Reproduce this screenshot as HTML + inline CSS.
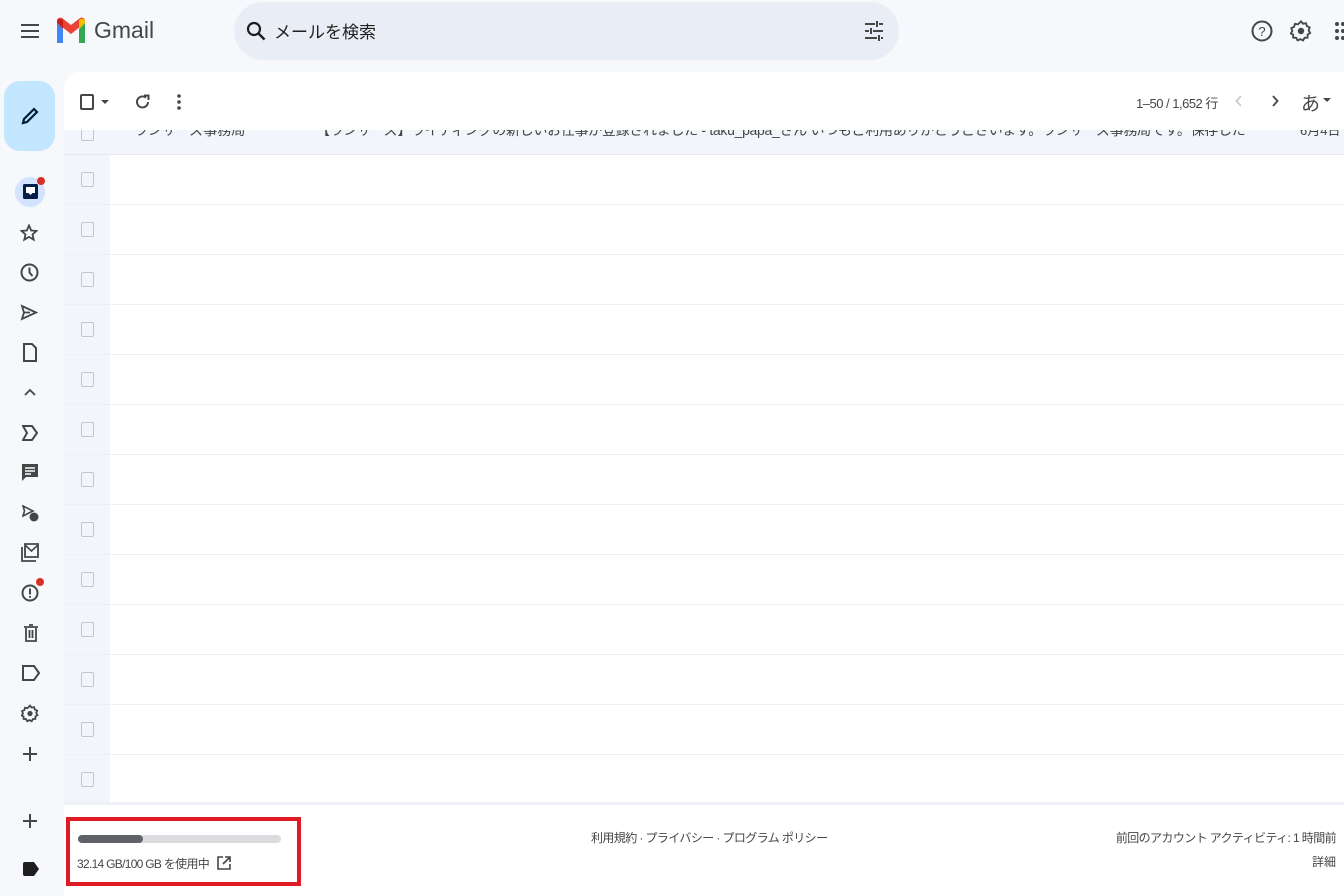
<!DOCTYPE html>
<html><head><meta charset="utf-8"><style>
*{margin:0;padding:0;box-sizing:border-box}
body{width:1344px;height:896px;overflow:hidden;background:#f6f8fc;font-family:"Liberation Sans","Noto Sans CJK JP",sans-serif;color:#444746;position:relative}
.abs{position:absolute}
svg{display:block}
.main{position:absolute;left:64px;top:72px;width:1290px;height:824px;background:#fff;border-top-left-radius:16px;overflow:hidden}
.row{position:absolute;left:0;width:1290px;height:50px;border-bottom:1px solid #eceff3}
.gcol{position:absolute;left:0;width:46px;height:100%;background:#f2f6fc}
.cb{position:absolute;left:17px;width:13px;height:15px;border:1.5px solid #c4c7c5;border-radius:2px}
.side{position:absolute;left:20px}
</style></head><body>
<!-- header -->
<div class="abs" style="left:21px;top:24px">
<svg width="18" height="14"><path d="M0 1h18M0 7h18M0 13h18" stroke="#444746" stroke-width="2"/></svg></div>
<div class="abs" style="left:56px;top:17px">
<svg width="30" height="28" viewBox="0 0 30 28"><path d="M1 6v20h6V12z" fill="#4285f4"/><path d="M23 12v14h6V6z" fill="#34a853"/><path d="M1 6l14 11 14-11v-2c0-3-3-4-5-3L15 8 6 1C4 0 1 1 1 4z" fill="#ea4335"/><path d="M23 3v9l6-6V4c0-2-3-3-6-1z" fill="#fbbc04"/><path d="M1 4v2l6 6V3C5 1 1 2 1 4z" fill="#c5221f"/></svg></div>
<div class="abs" style="left:94px;top:17px;font-size:23px;color:#444746">Gmail</div>
<div class="abs" style="left:234px;top:2px;width:665px;height:58px;background:#e9eef6;border-radius:29px"></div>
<div class="abs" style="left:246px;top:21px"><svg width="20" height="20"><circle cx="8" cy="8" r="6" fill="none" stroke="#1f1f1f" stroke-width="2.2"/><path d="M12.5 12.5l6 6" stroke="#1f1f1f" stroke-width="2.5"/></svg></div>
<div class="abs" style="left:274px;top:18px;font-size:17px;color:#1f1f1f">メールを検索</div>
<div class="abs" style="left:864px;top:21px"><svg width="20" height="20"><path d="M1 3h10M15 3h4M1 10h4M9 10h10M1 17h12M17 17h2M13 0v6M7 7v6M15 14v6" stroke="#444746" stroke-width="2"/></svg></div>
<div class="abs" style="left:1251px;top:20px"><svg width="22" height="22"><circle cx="11" cy="11" r="9.5" fill="none" stroke="#444746" stroke-width="2"/><text x="11" y="16" font-size="13" text-anchor="middle" fill="#444746" font-family="Liberation Sans">?</text></svg></div>
<div class="abs" style="left:1290px;top:19px"><svg width="22" height="24" viewBox="0 0 24 24"><path d="M12 1.5l2.2 2.6 3.3-.6.9 3.2 3.1 1.4-1.2 3.1 1.7 2.9-2.8 1.8v3.3l-3.3.2-1.6 2.9-3-1.4-3 1.4-1.6-2.9-3.3-.2v-3.3L.9 14.8l1.7-2.9-1.2-3.1 3.1-1.4.9-3.2 3.3.6z" fill="none" stroke="#444746" stroke-width="2"/><circle cx="12" cy="12" r="3.5" fill="#444746"/></svg></div>
<div class="abs" style="left:1335px;top:22px"><svg width="9" height="18"><g fill="#444746"><circle cx="2" cy="2" r="2"/><circle cx="8" cy="2" r="2"/><circle cx="2" cy="9" r="2"/><circle cx="8" cy="9" r="2"/><circle cx="2" cy="16" r="2"/><circle cx="8" cy="16" r="2"/></g></svg></div>

<!-- compose -->
<div class="abs" style="left:4px;top:81px;width:51px;height:70px;background:#c2e7ff;border-radius:16px"></div>
<div class="abs" style="left:20px;top:106px"><svg width="20" height="20"><path d="M3 17l1-4L14 3l3 3L7 16z" fill="none" stroke="#001d35" stroke-width="2.2"/></svg></div>

<!-- sidebar icons -->
<div class="abs" style="left:15px;top:177px;width:30px;height:30px;border-radius:15px;background:#d3e3fd"></div>
<div class="abs" style="left:23px;top:184px"><svg width="16" height="16"><rect x="0" y="0" width="15" height="15" rx="1.5" fill="#041e49"/><path d="M3 3h9v6H9.5l-2 2-2-2H3z" fill="#fff"/></svg></div>
<div class="abs" style="left:37px;top:177px;width:8px;height:8px;border-radius:4px;background:#d93025"></div>
<div class="side" style="top:224px"><svg width="18" height="18"><path d="M9 1.5l2.2 5 5.3.4-4 3.5 1.2 5.3L9 12.9l-4.7 2.8 1.2-5.3-4-3.5 5.3-.4z" fill="none" stroke="#444746" stroke-width="1.8"/></svg></div>
<div class="side" style="top:263px"><svg width="19" height="19"><circle cx="9.5" cy="9.5" r="8" fill="none" stroke="#444746" stroke-width="2"/><path d="M9.5 4.5v5l3 3.5" fill="none" stroke="#444746" stroke-width="2"/></svg></div>
<div class="side" style="top:304px"><svg width="18" height="17"><path d="M2 2l14 6.5L2 15l2-6.5z M4 8.5h6" fill="none" stroke="#444746" stroke-width="1.8"/></svg></div>
<div class="side" style="top:343px;left:23px"><svg width="14" height="19"><path d="M1 1h8l4 4v13H1z" fill="none" stroke="#444746" stroke-width="2"/></svg></div>
<div class="side" style="top:388px;left:24px"><svg width="12" height="8"><path d="M1 7l5-5 5 5" fill="none" stroke="#444746" stroke-width="1.8"/></svg></div>
<div class="side" style="top:425px;left:22px"><svg width="16" height="16"><path d="M1 1h9l5 7-5 7H1l4-7z" fill="none" stroke="#444746" stroke-width="2"/></svg></div>
<div class="side" style="top:463px;left:21px"><svg width="18" height="20"><path d="M1 1h16v13H5l-4 4z" fill="#444746"/><path d="M4 5h10M4 8h10M4 11h6" stroke="#fff" stroke-width="1.5"/></svg></div>
<div class="side" style="top:505px;left:22px"><svg width="18" height="18"><path d="M1 1l10 5L1 11l1.5-5z" fill="none" stroke="#444746" stroke-width="1.6"/><circle cx="12" cy="12" r="4.5" fill="#444746"/></svg></div>
<div class="side" style="top:543px;left:21px"><svg width="18" height="19"><path d="M4 1h13v13H4z M1 4v14h14" fill="none" stroke="#444746" stroke-width="1.8"/><path d="M4 2l6.5 6L17 2" fill="none" stroke="#444746" stroke-width="1.6"/></svg></div>
<div class="side" style="top:584px;left:21px"><svg width="18" height="18"><circle cx="9" cy="9" r="7.5" fill="none" stroke="#444746" stroke-width="2"/><path d="M9 4.5v6M9 12v1.8" stroke="#444746" stroke-width="2"/></svg></div>
<div class="abs" style="left:36px;top:578px;width:8px;height:8px;border-radius:4px;background:#d93025"></div>
<div class="side" style="top:624px;left:24px"><svg width="14" height="18"><path d="M0 3h14M5 1h4M2 4v13h10V4M5.5 6v8M8.5 6v8" fill="none" stroke="#444746" stroke-width="1.8"/></svg></div>
<div class="side" style="top:665px;left:22px"><svg width="18" height="16"><path d="M1 1h11l5 7-5 7H1z" fill="none" stroke="#444746" stroke-width="2"/></svg></div>
<div class="side" style="top:704px;left:21px"><svg width="18" height="19" viewBox="0 0 24 24"><path d="M12 1.5l2.2 2.6 3.3-.6.9 3.2 3.1 1.4-1.2 3.1 1.7 2.9-2.8 1.8v3.3l-3.3.2-1.6 2.9-3-1.4-3 1.4-1.6-2.9-3.3-.2v-3.3L.9 14.8l1.7-2.9-1.2-3.1 3.1-1.4.9-3.2 3.3.6z" fill="none" stroke="#444746" stroke-width="2.4"/><circle cx="12" cy="12" r="3.5" fill="#444746"/></svg></div>
<div class="side" style="top:746px;left:22px"><svg width="16" height="16"><path d="M8 1v14M1 8h14" stroke="#444746" stroke-width="2"/></svg></div>
<div class="side" style="top:813px;left:22px"><svg width="16" height="16"><path d="M8 1v14M1 8h14" stroke="#444746" stroke-width="2"/></svg></div>
<div class="side" style="top:862px;left:23px"><svg width="16" height="14"><path d="M2 0h9l5 7-5 7H2a2 2 0 0 1-2-2V2a2 2 0 0 1 2-2z" fill="#1f1f1f"/></svg></div>

<!-- main -->
<div class="main">
  <div class="row" style="top:48px;height:35px;background:#f2f6fc;border-bottom:1px solid #e6e9ee">
    <div class="cb" style="top:6px"></div>
    <div class="abs" style="left:70px;top:0px;font-size:14px;color:#444;white-space:nowrap">ランサーズ事務局</div>
    <div class="abs" style="left:252px;top:0px;width:930px;overflow:hidden;font-size:14px;color:#444;white-space:nowrap;letter-spacing:-0.3px">【ランサーズ】ライティングの新しいお仕事が登録されました - taku_papa_さん いつもご利用ありがとうございます。ランサーズ事務局です。保存したライティ...</div>
    <div class="abs" style="left:1236px;top:0px;font-size:13px;color:#444">6月4日</div>
  </div>
  <div class="abs" style="left:0;top:0;width:1290px;height:58px;background:#fff">
    <div class="abs" style="left:16px;top:22px;width:14px;height:16px;border:2px solid #444746;border-radius:2px"></div>
    <div class="abs" style="left:37px;top:28px;border:4px solid transparent;border-top:4px solid #444746;border-bottom:0"></div>
    <div class="abs" style="left:71px;top:21px"><svg width="16" height="18"><path d="M13 9a5.5 5.5 0 1 1-2-4.3" fill="none" stroke="#444746" stroke-width="2"/><path d="M9 2.5h4.5v4.5" fill="none" stroke="#444746" stroke-width="2"/></svg></div>
    <div class="abs" style="left:113px;top:22px"><svg width="4" height="16"><circle cx="2" cy="2" r="1.8" fill="#444746"/><circle cx="2" cy="8" r="1.8" fill="#444746"/><circle cx="2" cy="14" r="1.8" fill="#444746"/></svg></div>
    <div class="abs" style="left:1072px;top:21px;font-size:13px;color:#444746;letter-spacing:-0.5px">1–50 / 1,652 行</div>
    <div class="abs" style="left:1171px;top:23px"><svg width="8" height="12"><path d="M6 1L1.5 6 6 11" fill="none" stroke="#c4c7c5" stroke-width="1.6"/></svg></div>
    <div class="abs" style="left:1207px;top:23px"><svg width="8" height="12"><path d="M2 1l4.5 5L2 11" fill="none" stroke="#444746" stroke-width="1.8"/></svg></div>
    <div class="abs" style="left:1237px;top:17px;font-size:19px;color:#444746">あ</div>
    <div class="abs" style="left:1259px;top:26px;border:4px solid transparent;border-top:4px solid #444746;border-bottom:0"></div>
  </div>
  <div class="row" style="top:83px"><div class="gcol"></div><div class="cb" style="top:17px"></div></div>
  <div class="row" style="top:133px"><div class="gcol"></div><div class="cb" style="top:17px"></div></div>
  <div class="row" style="top:183px"><div class="gcol"></div><div class="cb" style="top:17px"></div></div>
  <div class="row" style="top:233px"><div class="gcol"></div><div class="cb" style="top:17px"></div></div>
  <div class="row" style="top:283px"><div class="gcol"></div><div class="cb" style="top:17px"></div></div>
  <div class="row" style="top:333px"><div class="gcol"></div><div class="cb" style="top:17px"></div></div>
  <div class="row" style="top:383px"><div class="gcol"></div><div class="cb" style="top:17px"></div></div>
  <div class="row" style="top:433px"><div class="gcol"></div><div class="cb" style="top:17px"></div></div>
  <div class="row" style="top:483px"><div class="gcol"></div><div class="cb" style="top:17px"></div></div>
  <div class="row" style="top:533px"><div class="gcol"></div><div class="cb" style="top:17px"></div></div>
  <div class="row" style="top:583px"><div class="gcol"></div><div class="cb" style="top:17px"></div></div>
  <div class="row" style="top:633px"><div class="gcol"></div><div class="cb" style="top:17px"></div></div>
  <div class="row" style="top:683px;height:50px;border-bottom:3px solid #eef1f5"><div class="gcol"></div><div class="cb" style="top:17px"></div></div>
  <!-- footer -->
  <div class="abs" style="left:2px;top:745px;width:235px;height:69px;border:4px solid #e01b24"></div>
  <div class="abs" style="left:14px;top:763px;width:203px;height:8px;border-radius:4px;background:#dadce0"></div>
  <div class="abs" style="left:14px;top:763px;width:65px;height:8px;border-radius:4px;background:#5f6368"></div>
  <div class="abs" style="left:13px;top:783px;font-size:12px;color:#444746;letter-spacing:-0.7px;white-space:nowrap">32.14 GB/100 GB を使用中</div>
  <div class="abs" style="left:153px;top:784px"><svg width="14" height="14"><path d="M6 1H1v12h12V8M8 1h5v5M13 1L6 8" fill="none" stroke="#444746" stroke-width="1.6"/></svg></div>
  <div class="abs" style="left:527px;top:757px;font-size:12px;color:#444746;white-space:nowrap;letter-spacing:-0.6px">利用規約 · プライバシー · プログラム ポリシー</div>
  <div class="abs" style="right:18px;top:757px;font-size:12px;color:#444746;white-space:nowrap;letter-spacing:-0.6px">前回のアカウント アクティビティ: 1 時間前</div>
  <div class="abs" style="right:18px;top:781px;font-size:12px;color:#444746">詳細</div>
</div>
</body></html>
